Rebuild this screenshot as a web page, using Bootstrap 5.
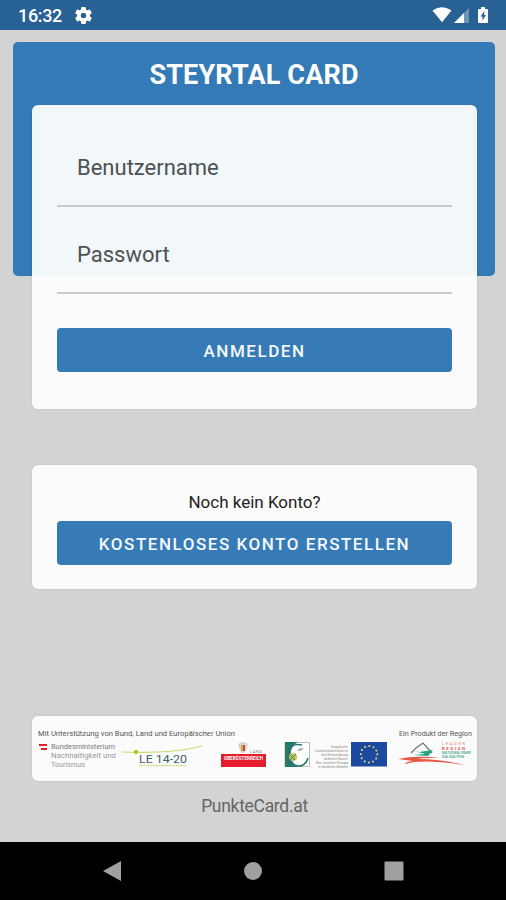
<!DOCTYPE html>
<html lang="de">
<head>
<meta charset="utf-8">
<meta name="viewport" content="width=device-width, initial-scale=1">
<title>Steyrtal Card</title>
<link href="https://cdn.jsdelivr.net/npm/bootstrap@5.3.0/dist/css/bootstrap.min.css" rel="stylesheet">
<style>
body{font-family:Roboto,"Liberation Sans",sans-serif;background:#d3d3d3;height:900px;overflow:hidden}
.statusbar{height:30px;background:#286193;padding:0 17px 0 18px}
.clock{font-size:18px;font-weight:500;line-height:30px;letter-spacing:-.35px;padding-top:1px}
.gear{margin-left:13px}
.hero{height:234px;margin:12px 11px -171px 13px;background:#337ab7;border-radius:5px}
.hero h1{font-size:27px;font-weight:700;line-height:32px;padding-top:17px;letter-spacing:.15px}
.panel{margin-left:32px;margin-right:29px;border:0;border-radius:6px;background:#fbfbfb;box-shadow:0 0 2px rgba(0,0,0,.12)}
.login{height:304px;padding:0 25px;background:linear-gradient(#f2f7f9 171px,#fbfbfb 171px)}
.login .form-control{border:0;border-bottom:2px solid #c9cacb;border-radius:0;background:transparent;font-size:22px;line-height:28px;padding:10px 20px 0;height:87px}
.login .form-control:first-child{height:102px;padding-top:25px}
.login .form-control::placeholder{color:#4d5153;opacity:1}
.action{height:44px;background:#377bb6;border:0;border-radius:4px;color:#f5f8fb;font-size:17px;font-weight:500;letter-spacing:1.53px;line-height:46px;padding:0}
.login .action{margin-top:34px}
.signup{height:124px;margin-top:56px;padding:25px 25px 0}
.signup p{font-size:17px;line-height:25px;margin-bottom:6px;color:#222}
.sponsors{height:65px;margin-top:127px}
.site{font-size:17.5px;line-height:24px;margin-top:13px;color:#666;letter-spacing:-.3px;padding-left:3px}
.navkeys{height:58px;background:#000;padding:0 102px}
</style>
<script src="https://cdn.jsdelivr.net/npm/bootstrap@5.3.0/dist/js/bootstrap.bundle.min.js"></script>
</head>
<body class="d-flex flex-column">
<header class="statusbar d-flex justify-content-between align-items-center text-white flex-shrink-0">
  <div class="d-flex align-items-center">
    <span class="clock">16:32</span>
    <svg class="gear" width="17" height="17" viewBox="2 2 20 20" fill="#fff"><path d="M19.43 12.98c.04-.32.07-.64.07-.98s-.03-.66-.07-.98l2.11-1.65c.19-.15.24-.42.12-.64l-2-3.46c-.12-.22-.39-.3-.61-.22l-2.49 1c-.52-.4-1.08-.73-1.69-.98l-.38-2.65A.49.49 0 0 0 14 2h-4c-.25 0-.46.18-.49.42l-.38 2.65c-.61.25-1.17.59-1.69.98l-2.49-1c-.23-.09-.49 0-.61.22l-2 3.46c-.13.22-.07.49.12.64l2.11 1.65c-.04.32-.07.65-.07.98s.03.66.07.98l-2.11 1.65c-.19.15-.24.42-.12.64l2 3.46c.12.22.39.3.61.22l2.49-1c.52.4 1.08.73 1.69.98l.38 2.65c.03.24.24.42.49.42h4c.25 0 .46-.18.49-.42l.38-2.65c.61-.25 1.17-.59 1.69-.98l2.49 1c.23.09.49 0 .61-.22l2-3.46c.12-.22.07-.49-.12-.64zM12 15.2a3.2 3.2 0 1 1 0-6.4 3.2 3.2 0 0 1 0 6.4z"/></svg>
  </div>
  <svg width="58" height="18" viewBox="0 0 58 18"><path d="M1.500 4.500Q11-1.800 20.500 4.500L11 16.300z" fill="#fff"/><path d="M38 2v15H23z" fill="#6f95b6"/><path d="M33 7v10H23z" fill="#fff"/><path d="M50 1h4v2h2q1 0 1 1v12q0 1-1 1h-8q-1 0-1-1V4q0-1 1-1h2z" fill="#fff"/><path d="M53.500 5l-4 5.500h2v4l3.500-5.500h-2z" fill="#286193"/></svg>
</header>
<main class="flex-grow-1">
  <section class="hero text-center text-white"><h1 class="m-0">STEYRTAL CARD</h1></section>
  <form class="card panel login position-relative">
    <input class="form-control shadow-none" placeholder="Benutzername" aria-label="Benutzername">
    <input class="form-control shadow-none" type="password" placeholder="Passwort" aria-label="Passwort">
    <button class="btn action w-100" type="button">ANMELDEN</button>
  </form>
  <section class="card panel signup text-center">
    <p>Noch kein Konto?</p>
    <button class="btn action w-100" type="button">KOSTENLOSES KONTO ERSTELLEN</button>
  </section>
  <section class="card panel sponsors">
    <svg width="445" height="65" viewBox="32 716 445 65" font-family="Roboto, sans-serif">
      <g fill="#555" font-size="7">
        <text x="38" y="736" textLength="197" lengthAdjust="spacingAndGlyphs">Mit Unterstützung von Bund, Land und Europäischer Union</text>
        <text x="399" y="736" textLength="73" lengthAdjust="spacingAndGlyphs">Ein Produkt der Region</text>
      </g>
      <path d="M39 744h8v2h-8zM41 748h6v2h-6z" fill="#e2232b"/>
      <g font-size="7" fill="#999">
        <text x="51" y="749" fill="#777" textLength="64" lengthAdjust="spacingAndGlyphs">Bundesministerium</text>
        <text x="51" y="758" textLength="65" lengthAdjust="spacingAndGlyphs">Nachhaltigkeit und</text>
        <text x="51" y="767" textLength="34" lengthAdjust="spacingAndGlyphs">Tourismus</text>
      </g>
      <path d="M122 752Q172 754 202 746" fill="none" stroke="#c8d96c" stroke-width="1.200"/>
      <circle cx="136" cy="752" r="2.200" fill="#a9cb2c"/>
      <text x="139" y="762.500" font-size="11" fill="#426267" textLength="48" lengthAdjust="spacingAndGlyphs">LE 14-20</text>
      <path d="M139 765.500h47" stroke="#d5df98" stroke-width="1.500" stroke-dasharray="3 .7"/>
      <!-- Land Oberösterreich -->
      <path d="M221 754h45v13h-45z" fill="#e41c2c"/>
      <path d="M238 744q5-4 10 0l-2 7q-3 4-6 0z" fill="#ddd2d2"/>
      <path d="M241 745h2v6h-2z" fill="#d6aa36"/><path d="M243 745h2v6h-2z" fill="#b74f57"/>
      <text x="250" y="753" font-size="4" fill="#777" textLength="12">LAND</text>
      <text x="224" y="760" font-size="5" font-weight="700" fill="#fff" textLength="39" lengthAdjust="spacingAndGlyphs">OBERÖSTERREICH</text>
      <!-- LEADER -->
      <path d="M285 742.500h24.500v24H285z" fill="#fff" stroke="#8aa9a2" stroke-width=".7"/>
      <path d="M285 742h13q-8 4-8 13t8 12h-13z" fill="#23776c"/>
      <path d="M302 745q-12-3-12 9t10 12q6-1 8-8" fill="none" stroke="#2b776d" stroke-width="1.500"/>
      <circle cx="293" cy="757" r="4" fill="#bfc560"/><path d="M290 755l5 5m-5 0l6-6M287 744v21" stroke="#477f55"/>
      <path d="M297 751q2-4 7-3l-3 3z" fill="#aebfba"/>
      <g font-size="3.800" fill="#888">
        <text x="331" y="748" textLength="17" lengthAdjust="spacingAndGlyphs">Europäischer</text>
        <text x="315" y="752" textLength="33" lengthAdjust="spacingAndGlyphs">Landwirtschaftsfonds für</text>
        <text x="321" y="756" textLength="27" lengthAdjust="spacingAndGlyphs">die Entwicklung</text>
        <text x="324" y="760" textLength="24" lengthAdjust="spacingAndGlyphs">ländlichen Raums:</text>
        <text x="316" y="764" textLength="32" lengthAdjust="spacingAndGlyphs">Hier investiert Europa</text>
        <text x="318" y="767.500" textLength="30" lengthAdjust="spacingAndGlyphs">in ländliche Gebiete</text>
      </g>
      <path d="M351 742h36v24.500h-36z" fill="#1c489f"/>
      <circle cx="369" cy="754.300" r="8.300" fill="none" stroke="#e0d66c" stroke-width="2" stroke-linecap="round" stroke-dasharray=".1 4.246"/>
      <!-- Region Steyrtal -->
      <path d="M411 753l5-5 7-5 9 10" fill="none" stroke="#68757a" stroke-width="1.200"/>
      <path d="M411 750l8 2 14-2-5 6-15-1 12-1z" fill="#25a382"/>
      <path d="M398 759q18-4 42-1-18-.5-23 1 24 0 47 6-28-5-50-3l-9 2q0-2 8-3-8-1-15-2z" fill="#e55a45"/>
      <g font-size="4.300" fill="#e27970">
        <text x="442" y="745" textLength="23">LEADER</text>
        <text x="442" y="750" font-weight="700" fill="#dc5a55" textLength="23">REGION</text>
      </g>
      <g font-size="3.500" fill="#42a387" font-weight="500">
        <text x="442" y="754" textLength="29" lengthAdjust="spacingAndGlyphs">NATIONALPARK</text>
        <text x="442" y="757.500" textLength="22" lengthAdjust="spacingAndGlyphs">KALKALPEN</text>
      </g>
    </svg>
  </section>
  <footer class="site text-center">PunkteCard.at</footer>
</main>
<nav class="navkeys d-flex justify-content-between align-items-center flex-shrink-0">
  <svg width="20" height="22" viewBox="0 0 20 22"><path d="M1 11L19 1v20z" fill="#a0a0a0"/></svg>
  <svg width="18" height="18" viewBox="0 0 18 18"><circle cx="9" cy="9" r="9" fill="#a0a0a0"/></svg>
  <svg width="20" height="20" viewBox="0 0 20 20"><rect x=".5" y=".5" width="19" height="19" rx="1" fill="#a0a0a0"/></svg>
</nav>
</body>
</html>
